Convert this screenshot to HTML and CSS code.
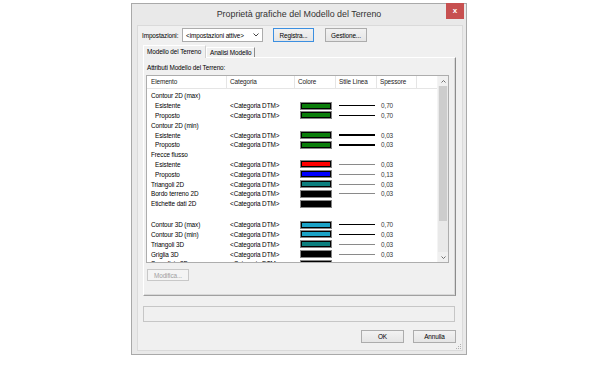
FILE: index.html
```html
<!DOCTYPE html>
<html lang="it">
<head>
  <meta charset="UTF-8">
  <meta name="viewport" content="width=device-width, initial-scale=1.0">
  <title>Proprietà grafiche del Modello del Terreno</title>
  <link rel="stylesheet" href="styles.css">
</head>
<body>
  <div class="window">
    <div class="titlebar">
      <span class="title">Proprietà grafiche del Modello del Terreno</span>
      <span class="close">x</span>
    </div>

    <div class="client">
      <!-- Impostazioni -->
      <div class="settings-row">
        <span class="settings-label">Impostazioni:</span>
        <div class="select">
          <span>&lt;impostazioni attive&gt;</span>
          <svg class="caret" width="6" height="4" viewBox="0 0 6 4"><path d="M0.5 0.5 L3 3 L5.5 0.5" fill="none" stroke="#444" stroke-width="1"/></svg>
        </div>
        <button class="btn btn-default btn-registra">Registra...</button>
        <button class="btn btn-gestione">Gestione...</button>
      </div>

      <!-- Tabs -->
      <div class="tabs">
        <div class="tab active">Modello del Terreno</div>
        <div class="tab">Analisi Modello</div>
      </div>

      <div class="tab-panel">
        <div class="group-label">Attributi Modello del Terreno:</div>

        <div class="list">
          <div class="list-main">
            <div class="list-header">
              <div class="hcell">Elemento</div>
              <div class="hcell">Categoria</div>
              <div class="hcell">Colore</div>
              <div class="hcell">Stile Linea</div>
              <div class="hcell">Spessore</div>
              <div class="hcell"></div>
            </div>
            <div class="rows">
              <div class="row"><span class="el">Contour 2D (max)</span></div>
              <div class="row"><span class="el sub">Esistente</span><span class="cat">&lt;Categoria DTM&gt;</span><span class="col"><i class="swatch green"></i></span><span class="col"><i class="line dark"></i></span><span class="val">0,70</span></div>
              <div class="row"><span class="el sub">Proposto</span><span class="cat">&lt;Categoria DTM&gt;</span><span class="col"><i class="swatch green"></i></span><span class="col"><i class="line dark"></i></span><span class="val">0,70</span></div>
              <div class="row"><span class="el">Contour 2D (min)</span></div>
              <div class="row"><span class="el sub">Esistente</span><span class="cat">&lt;Categoria DTM&gt;</span><span class="col"><i class="swatch green"></i></span><span class="col"><i class="line dark"></i></span><span class="val">0,03</span></div>
              <div class="row"><span class="el sub">Proposto</span><span class="cat">&lt;Categoria DTM&gt;</span><span class="col"><i class="swatch green"></i></span><span class="col"><i class="line dark"></i></span><span class="val">0,03</span></div>
              <div class="row"><span class="el">Frecce flusso</span></div>
              <div class="row"><span class="el sub">Esistente</span><span class="cat">&lt;Categoria DTM&gt;</span><span class="col"><i class="swatch red"></i></span><span class="col"><i class="line"></i></span><span class="val">0,03</span></div>
              <div class="row"><span class="el sub">Proposto</span><span class="cat">&lt;Categoria DTM&gt;</span><span class="col"><i class="swatch blue"></i></span><span class="col"><i class="line"></i></span><span class="val">0,13</span></div>
              <div class="row"><span class="el">Triangoli 2D</span><span class="cat">&lt;Categoria DTM&gt;</span><span class="col"><i class="swatch teal"></i></span><span class="col"><i class="line"></i></span><span class="val">0,03</span></div>
              <div class="row"><span class="el">Bordo terreno 2D</span><span class="cat">&lt;Categoria DTM&gt;</span><span class="col"><i class="swatch black"></i></span><span class="col"><i class="line"></i></span><span class="val">0,03</span></div>
              <div class="row"><span class="el">Etichette dati 2D</span><span class="cat">&lt;Categoria DTM&gt;</span><span class="col"><i class="swatch black"></i></span></div>
              <div class="row spacer"></div>
              <div class="row"><span class="el">Contour 3D (max)</span><span class="cat">&lt;Categoria DTM&gt;</span><span class="col"><i class="swatch cyan"></i></span><span class="col"><i class="line dark"></i></span><span class="val">0,70</span></div>
              <div class="row"><span class="el">Contour 3D (min)</span><span class="cat">&lt;Categoria DTM&gt;</span><span class="col"><i class="swatch cyan"></i></span><span class="col"><i class="line dark"></i></span><span class="val">0,03</span></div>
              <div class="row"><span class="el">Triangoli 3D</span><span class="cat">&lt;Categoria DTM&gt;</span><span class="col"><i class="swatch teal"></i></span><span class="col"><i class="line"></i></span><span class="val">0,03</span></div>
              <div class="row"><span class="el">Griglia 3D</span><span class="cat">&lt;Categoria DTM&gt;</span><span class="col"><i class="swatch black"></i></span><span class="col"><i class="line"></i></span><span class="val">0,03</span></div>
              <div class="row"><span class="el">Superficie 3D</span><span class="cat">&lt;Categoria DTM&gt;</span><span class="col"><i class="swatch tan"></i></span></div>
            </div>
          </div>
          <div class="scrollbar">
            <div class="sb-btn">
              <svg width="5" height="3" viewBox="0 0 5 3"><path d="M0.5 2.5 L2.5 0.5 L4.5 2.5" fill="none" stroke="#606060" stroke-width="0.9"/></svg>
            </div>
            <div class="sb-thumb"></div>
            <div class="sb-track"></div>
            <div class="sb-btn">
              <svg width="5" height="3" viewBox="0 0 5 3"><path d="M0.5 0.5 L2.5 2.5 L4.5 0.5" fill="none" stroke="#606060" stroke-width="0.9"/></svg>
            </div>
          </div>
        </div>

        <button class="btn btn-modifica" disabled>Modifica...</button>
      </div>

      <div class="status-field"></div>

      <div class="footer">
        <button class="btn btn-ok">OK</button>
        <button class="btn btn-annulla">Annulla</button>
      </div>

      <svg class="grip" width="5" height="5" viewBox="0 0 5 5">
        <rect x="4" y="0" width="1" height="1" fill="#b0b0b0"/>
        <rect x="2" y="2" width="1" height="1" fill="#b0b0b0"/>
        <rect x="4" y="2" width="1" height="1" fill="#b0b0b0"/>
        <rect x="0" y="4" width="1" height="1" fill="#b0b0b0"/>
        <rect x="2" y="4" width="1" height="1" fill="#b0b0b0"/>
        <rect x="4" y="4" width="1" height="1" fill="#b0b0b0"/>
      </svg>
    </div>
  </div>
</body>
</html>
```

FILE: styles.css
```css
body {
  margin: 0;
  background: #fff;
  font-family: "Liberation Sans", Arial, sans-serif;
  font-size: 6.4px;
  letter-spacing: -0.1px;
  color: #000;
}

/* dialog frame */
.window {
  width: 336px;
  height: 352px;
  margin: 3px 0 0 131px;
  box-sizing: border-box;
  border: 1px solid #a9a9a9;
  background: #e9e9e9;
  display: flex;
  flex-direction: column;
}
.titlebar {
  position: relative;
  height: 21px;
  display: flex;
  align-items: center;
  justify-content: center;
}
.title {
  font-size: 8.9px;
  letter-spacing: 0;
  color: #333;
  margin-top: -1px;
}
.close {
  position: absolute;
  top: -1px;
  right: 2px;
  width: 18px;
  height: 16px;
  background: #c75050;
  color: #fff;
  font-weight: bold;
  font-size: 8px;
  line-height: 15px;
  text-align: center;
}
.client {
  position: relative;
  flex: 1;
  margin: 0 3px 3px 5px;
  box-sizing: border-box;
  border: 1px solid #dadada;
  background: #f0f0f0;
}

/* buttons */
.btn {
  box-sizing: border-box;
  padding: 0;
  font-family: inherit;
  font-size: 6.4px;
  letter-spacing: -0.1px;
  color: #000;
  border: 1px solid #acacac;
  background: linear-gradient(#f2f2f2, #e5e5e5);
  text-align: center;
}
.btn-default {
  border-color: #3c8fe0;
}
.btn:disabled {
  color: #a0a0a0;
  border-color: #c8c8c8;
  background: #f4f4f4;
}

/* top settings row */
.settings-row {
  display: flex;
  align-items: center;
  height: 14px;
  margin-top: 2px;
  padding-left: 4px;
}
.settings-label {
  width: 40px;
}
.select {
  box-sizing: border-box;
  width: 81px;
  height: 14px;
  display: flex;
  align-items: center;
  justify-content: space-between;
  padding: 0 3px 0 3px;
  border: 1px solid #acacac;
  background: #fff;
}
.caret {
  display: block;
}
.btn-registra {
  width: 41px;
  height: 14px;
  margin-left: 10px;
}
.btn-gestione {
  width: 42px;
  height: 14px;
  margin-left: 11px;
}

/* tabs */
.tabs {
  display: flex;
  align-items: flex-end;
  height: 12px;
  margin: 3px 0 0 5px;
}
.tab {
  box-sizing: border-box;
  height: 10px;
  padding: 0 3px;
  line-height: 9px;
  background: #f0f0f0;
  border: 1px solid #fff;
  border-bottom: none;
  border-right-color: #8c8c8c;
}
.tab.active {
  position: relative;
  z-index: 1;
  width: 63px;
  height: 13px;
  margin-bottom: -1px;
  padding-left: 3px;
  line-height: 11px;
  border-right-color: #d0d0d0;
}

.tab-panel {
  box-sizing: border-box;
  width: 313px;
  height: 239px;
  margin-left: 5px;
  border: 1px solid #fff;
  border-right-color: #8c8c8c;
  border-bottom-color: #a0a0a0;
  box-shadow: inset -1px -1px 0 #d8d8d8;
  display: flex;
  flex-direction: column;
  align-items: flex-start;
}
.group-label {
  margin: 6px 0 0 3px;
  line-height: 8px;
}

/* list view */
.list {
  box-sizing: border-box;
  width: 303px;
  height: 188px;
  margin: 3px 0 0 2px;
  border: 1px solid #adadad;
  background: #fff;
  display: flex;
}
.list-main {
  flex: 1;
  min-width: 0;
  overflow: hidden;
}
.list-header,
.row {
  display: grid;
  grid-template-columns: 80px 68px 41px 41px 40px 1fr;
}
.list-header {
  height: 13px;
  box-sizing: border-box;
  border-bottom: 1px solid #e5e5e5;
  color: #222;
}
.hcell {
  border-right: 1px solid #e5e5e5;
  padding-left: 3px;
  line-height: 12px;
}
.hcell:first-child {
  padding-left: 4px;
}
.hcell:last-child {
  border-right: none;
}
.rows {
  padding-top: 2px;
}
.row {
  height: 9.8px;
  align-items: center;
  white-space: nowrap;
}
.row.spacer {
  height: 11.2px;
}
.el {
  grid-column: 1;
  padding-left: 4px;
}
.el.sub {
  padding-left: 8px;
}
.cat {
  grid-column: 2;
  padding-left: 3px;
}
.col {
  display: flex;
  align-items: center;
}
.val {
  grid-column: 5;
  padding-left: 4px;
  color: #333;
}
.swatch {
  box-sizing: border-box;
  display: block;
  width: 32px;
  height: 8px;
  margin-left: 5px;
  border: 1px solid #858585;
  box-shadow: inset 0 0 0 1px #000;
}
.green { background: #0a7d0a; }
.red { background: #ff0000; }
.blue { background: #0000ff; }
.teal { background: #0b7f7f; }
.black { background: #000; }
.cyan { background: #1aa2c6; }
.tan { background: #e6a96e; }
.line {
  display: block;
  width: 36px;
  height: 1px;
  margin-left: 3px;
  background: #8a8a8a;
}
.line.dark {
  height: 1.3px;
  background: #000;
}

.scrollbar {
  width: 10px;
  display: flex;
  flex-direction: column;
  background: #e9e9e9;
  border-left: 1px solid #f4f4f4;
}
.sb-btn {
  height: 10px;
  display: flex;
  align-items: center;
  justify-content: center;
  background: #f0f0f0;
}
.sb-thumb {
  height: 135px;
  margin: 0 1px;
  background: #cdcdcd;
}
.sb-track {
  flex: 1;
}

.btn-modifica {
  width: 42px;
  height: 12px;
  margin: 6px 0 0 3px;
}

/* bottom */
.status-field {
  box-sizing: border-box;
  width: 312px;
  height: 16px;
  margin: 10px 0 0 5px;
  border: 1px solid #c6c6c6;
}
.footer {
  display: flex;
  justify-content: flex-end;
  gap: 9px;
  margin-top: 8px;
  padding-right: 6px;
}
.btn-ok,
.btn-annulla {
  width: 43px;
  height: 13px;
}
.grip {
  position: absolute;
  right: 1px;
  bottom: 1px;
}
```
